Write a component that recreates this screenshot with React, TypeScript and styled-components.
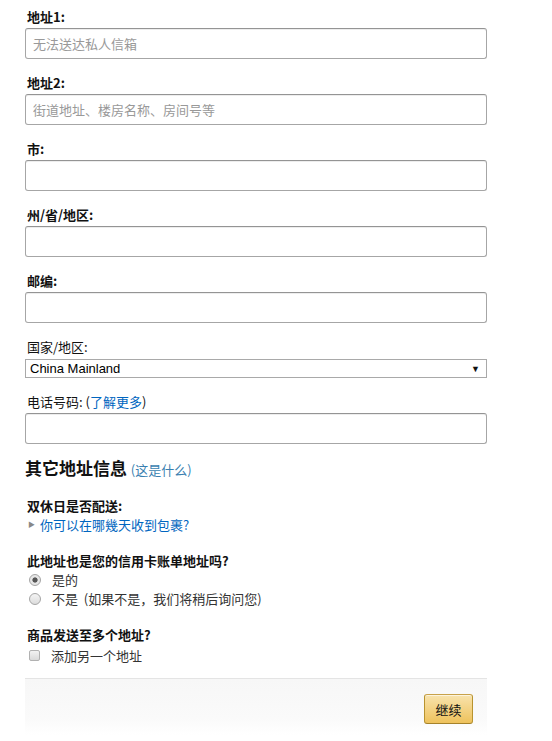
import React, { useState } from 'react';
import styled, { createGlobalStyle } from 'styled-components';

const GlobalStyle = createGlobalStyle`
  html, body {
    margin: 0;
    padding: 0;
    background: #fff;
  }
  body {
    font-family: Arial, "Liberation Sans", "Noto Sans CJK SC", sans-serif;
    font-size: 13px;
    color: #111;
  }
`;

const linkColor = '#0066c0';

export default function App(): React.JSX.Element {
  const [billing, setBilling] = useState<'yes' | 'no'>('yes');
  const [multi, setMulti] = useState<boolean>(false);

  return (
    <>
      <GlobalStyle />
      <StyledForm>
        <StyledField>
          <StyledLabel>地址1:</StyledLabel>
          <StyledInput placeholder="无法送达私人信箱" />
        </StyledField>
        <StyledField>
          <StyledLabel>地址2:</StyledLabel>
          <StyledInput placeholder="街道地址、楼房名称、房间号等" />
        </StyledField>
        <StyledField>
          <StyledLabel>市:</StyledLabel>
          <StyledInput />
        </StyledField>
        <StyledField>
          <StyledLabel>州/省/地区:</StyledLabel>
          <StyledInput />
        </StyledField>
        <StyledField>
          <StyledLabel>邮编:</StyledLabel>
          <StyledInput />
        </StyledField>
        <StyledField $gap={3} $after={14}>
          <StyledLabel $regular>国家/地区:</StyledLabel>
          <StyledSelect>
            <span>China Mainland</span>
            <StyledArrow>▼</StyledArrow>
          </StyledSelect>
        </StyledField>
        <StyledField $after={12}>
          <StyledLabel $regular>
            电话号码: (<StyledLink>了解更多</StyledLink>)
          </StyledLabel>
          <StyledInput />
        </StyledField>

        <StyledHeading>
          其它地址信息 <StyledHeadingLink>(这是什么)</StyledHeadingLink>
        </StyledHeading>

        <StyledSection>
          <StyledLabel>双休日是否配送:</StyledLabel>
          <StyledExpander>
            <StyledCaret>▶</StyledCaret>
            <StyledLink>你可以在哪幾天收到包裹?</StyledLink>
          </StyledExpander>
        </StyledSection>

        <StyledSection>
          <StyledLabel>此地址也是您的信用卡账单地址吗?</StyledLabel>
          <StyledOption onClick={() => setBilling('yes')}>
            <StyledRadio $checked={billing === 'yes'} />
            是的
          </StyledOption>
          <StyledOption onClick={() => setBilling('no')}>
            <StyledRadio $checked={billing === 'no'} />
            不是 &nbsp;(如果不是，我们将稍后询问您)
          </StyledOption>
        </StyledSection>

        <StyledSection $after={12}>
          <StyledLabel>商品发送至多个地址?</StyledLabel>
          <StyledOption $tall onClick={() => setMulti(!multi)}>
            <StyledCheckbox $checked={multi} />
            添加另一个地址
          </StyledOption>
        </StyledSection>

        <StyledFooter>
          <StyledButton type="button">继续</StyledButton>
        </StyledFooter>
      </StyledForm>
    </>
  );
}

const StyledForm = styled.form`
  width: 462px;
  padding: 7px 0 0 25px;
  display: flex;
  flex-direction: column;
`;

const StyledField = styled.div<{ $gap?: number; $after?: number }>`
  display: flex;
  flex-direction: column;
  gap: ${(p) => p.$gap ?? 2}px;
  margin-bottom: ${(p) => p.$after ?? 14}px;
`;

const StyledLabel = styled.div<{ $regular?: boolean }>`
  padding-left: 2px;
  font-family: "Microsoft YaHei", "Noto Sans CJK SC", Arial, sans-serif;
  font-size: 13px;
  line-height: 19px;
  font-weight: ${(p) => (p.$regular ? 400 : 700)};
  color: #111;
`;

const StyledInput = styled.input`
  box-sizing: border-box;
  width: 100%;
  height: 31px;
  margin: 0;
  padding: 3px 7px;
  border: 1px solid #a6a6a6;
  border-top-color: #949494;
  border-radius: 3px;
  box-shadow: 0 1px 0 rgba(255, 255, 255, 0.5), 0 1px 0 rgba(0, 0, 0, 0.07) inset;
  background: #fff;
  font-family: "Microsoft YaHei", "Noto Sans CJK SC", Arial, sans-serif;
  font-size: 13px;
  color: #111;
  outline: none;

  &::placeholder {
    color: #999;
  }
`;

const StyledSelect = styled.div`
  box-sizing: border-box;
  width: 100%;
  height: 19px;
  padding: 0 6px 0 4px;
  border: 1px solid #a9a9a9;
  background: #fff;
  display: flex;
  align-items: center;
  justify-content: space-between;
  font-family: Arial, "Liberation Sans", sans-serif;
  font-size: 13px;
  color: #000;
`;

const StyledArrow = styled.span`
  font-size: 9px;
  color: #111;
`;

const StyledLink = styled.a`
  color: ${linkColor};
  cursor: pointer;
`;

const StyledHeading = styled.h2`
  margin: 0 0 14px;
  font-family: "Microsoft YaHei", "Noto Sans CJK SC", Arial, sans-serif;
  font-size: 17px;
  line-height: 24px;
  font-weight: 700;
  color: #111;
`;

const StyledHeadingLink = styled.span`
  font-size: 13px;
  font-weight: 400;
  color: #3a7fb0;
`;

const StyledSection = styled.div<{ $after?: number }>`
  display: flex;
  flex-direction: column;
  margin-bottom: ${(p) => p.$after ?? 17}px;
`;

const StyledExpander = styled.div`
  display: flex;
  align-items: center;
  gap: 5px;
  padding-left: 3px;
  font-family: "Microsoft YaHei", "Noto Sans CJK SC", Arial, sans-serif;
  font-size: 13px;
  line-height: 19px;
`;

const StyledCaret = styled.span`
  font-size: 7px;
  color: #888;
`;

const StyledOption = styled.label<{ $tall?: boolean }>`
  display: flex;
  align-items: center;
  gap: 11px;
  padding-left: 4px;
  height: ${(p) => (p.$tall ? 22 : 19)}px;
  font-family: "Microsoft YaHei", "Noto Sans CJK SC", Arial, sans-serif;
  font-size: 13px;
  color: #333;
  cursor: pointer;
`;

const StyledRadio = styled.span<{ $checked: boolean }>`
  box-sizing: border-box;
  width: 12px;
  height: 12px;
  border-radius: 50%;
  border: 1px solid #a5a5a5;
  background: ${(p) =>
    p.$checked
      ? 'radial-gradient(circle, #555 0, #555 2.2px, #e6e6e6 3px, #e6e6e6 100%)'
      : 'linear-gradient(#f4f4f4, #dcdcdc)'};
  flex: none;
`;

const StyledCheckbox = styled.span<{ $checked: boolean }>`
  box-sizing: border-box;
  width: 11px;
  height: 11px;
  border-radius: 2px;
  border: 1px solid #b1b1b1;
  background: ${(p) => (p.$checked ? '#666' : 'linear-gradient(#f2f2f2, #d9d9d9)')};
  flex: none;
`;

const StyledFooter = styled.div`
  height: 57px;
  box-sizing: border-box;
  padding: 15px 14px 0 0;
  border-top: 1px solid #e4e4e4;
  background: linear-gradient(#f7f7f7, #fafafa 70%, #fff);
  display: flex;
  justify-content: flex-end;
  align-items: flex-start;
`;

const StyledButton = styled.button`
  box-sizing: border-box;
  width: 49px;
  height: 30px;
  padding: 0;
  border: 1px solid;
  border-color: #c8a24a #b8932f #a5822a;
  border-radius: 3px;
  background: linear-gradient(#f8e3ad, #eec25c);
  box-shadow: 0 1px 0 rgba(255, 255, 255, 0.6) inset;
  font-family: "Microsoft YaHei", "Noto Sans CJK SC", Arial, sans-serif;
  font-size: 13px;
  color: #111;
  cursor: pointer;
`;
